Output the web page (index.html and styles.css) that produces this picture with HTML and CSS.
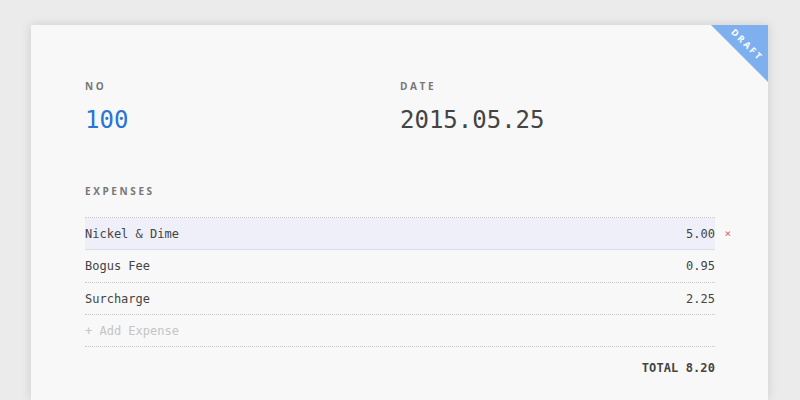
FILE: index.html
```html
<!DOCTYPE html>
<html>
<head>
<meta charset="utf-8">
<link rel="stylesheet" href="styles.css">
</head>
<body>
<div class="card">
  <div class="ribbon"><span class="ribbon-text">DRAFT</span></div>
  <div class="meta">
    <div class="field">
      <div class="label">NO</div>
      <div class="value value-no">100</div>
    </div>
    <div class="field">
      <div class="label">DATE</div>
      <div class="value">2015.05.25</div>
    </div>
  </div>
  <div class="label expenses-label">EXPENSES</div>
  <div class="list">
    <div class="row active"><span>Nickel &amp; Dime</span><span>5.00</span><span class="remove">×</span></div>
    <div class="row"><span>Bogus Fee</span><span>0.95</span></div>
    <div class="row"><span>Surcharge</span><span>2.25</span></div>
    <div class="row add"><span>+ Add Expense</span></div>
  </div>
  <div class="total">TOTAL 8.20</div>
</div>
</body>
</html>
```
FILE: styles.css
```css
html, body {
  margin: 0;
  padding: 0;
}
body {
  background: #ebebeb;
  width: 800px;
  height: 400px;
  overflow: hidden;
  font-family: "DejaVu Sans Mono", monospace;
}
.card {
  position: relative;
  margin: 25px 0 0 31px;
  width: 737px;
  height: 375px;
  background: #f8f8f8;
  box-shadow: 0 0 10px rgba(0, 0, 0, 0.13);
  box-sizing: border-box;
  padding: 54px 53px 0 54px;
  overflow: hidden;
}
.ribbon {
  position: absolute;
  top: 0;
  right: 0;
  width: 57px;
  height: 57px;
  background: #7eb0f0;
  clip-path: polygon(0 0, 100% 0, 100% 100%);
}
.ribbon-text {
  position: absolute;
  top: 15px;
  right: -6px;
  width: 54px;
  text-align: center;
  transform: rotate(45deg);
  font-family: "Open Sans", sans-serif;
  font-weight: 700;
  font-size: 9px;
  letter-spacing: 2.4px;
  color: #fff;
  line-height: 10px;
}
.meta {
  display: grid;
  grid-template-columns: 1fr 1fr;
}
.label {
  font-family: "Open Sans", sans-serif;
  font-weight: 700;
  font-size: 10px;
  letter-spacing: 2.6px;
  color: #777;
  line-height: 14px;
}
.value {
  margin-top: 12px;
  font-size: 24px;
  line-height: 30px;
  color: #444;
}
.value-no {
  color: #2a74d4;
}
.expenses-label {
  margin-top: 49px;
}
.list {
  margin-top: 19px;
  border-top: 1px dotted #c8c8c8;
}
.row {
  position: relative;
  display: flex;
  justify-content: space-between;
  height: 31.25px;
  line-height: 32px;
  font-size: 12px;
  color: #444;
  border-bottom: 1px dotted #c8c8c8;
}
.row.active {
  background: #eeeff9;
  border-bottom: 1px solid #dcdce4;
}
.remove {
  position: absolute;
  right: -16px;
  top: 0;
  color: #e06060;
  font-size: 11px;
}
.add {
  color: #c4c4c4;
}
.total {
  text-align: right;
  margin-top: 14px;
  font-size: 12px;
  font-weight: 700;
  color: #444;
  letter-spacing: 0.1px;
}
```
